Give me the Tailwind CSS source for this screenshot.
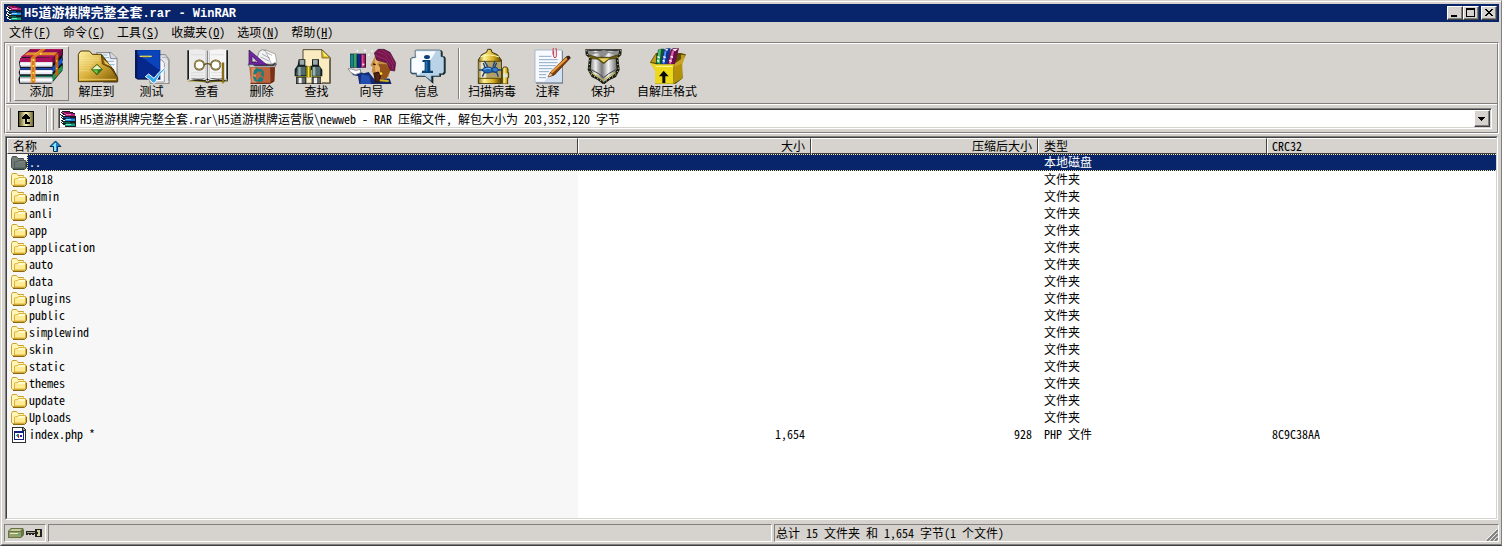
<!DOCTYPE html>
<html lang="zh-CN">
<head>
<meta charset="utf-8">
<title>H5道游棋牌完整全套.rar - WinRAR</title>
<script src="https://cdn.jsdelivr.net/npm/@tailwindcss/browser@4"></script>
</head>
<body class="bg-[#d6d3ce] text-black text-[12px] leading-4 font-['Noto_Sans_Mono_CJK_SC','Liberation_Serif','Noto_Sans_CJK_SC',monospace]">

<svg class="hidden" aria-hidden="true">
  <defs>
    <symbol id="rar" viewBox="0 0 16 16" shape-rendering="crispEdges">
      <path fill="#1a1a22" d="M2 0h8v1h3v1h2v3h1v11H5v-1H4v-1H2v-1H1v-2H0V9h1V6H0V3h1V1h1z"/>
      <path fill="#8c0f5e" d="M3 1h7v1h3v1H6V2H3z"/><path fill="#cf3f93" d="M2 1h2v1h2v1H4V2H2z"/><path fill="#b41f7a" d="M5 3h10v2H5z"/><path fill="#ee7fbd" d="M6 3h5v1H6z"/>
      <path fill="#fff" d="M1 2h1v1h1v1h2v1H3V4H1zM0 4h1v1h1v1h2v1H2V6H0z"/>
      <path fill="#0b4f9c" d="M3 6h7v1h5v1H6V7H3z"/><path fill="#1d93e0" d="M5 8h10v2H5z"/><path fill="#8fdcff" d="M6 8h5v1H6z"/>
      <path fill="#fff" d="M1 7h1v1h1v1h2v1H3V9H1zM0 9h1v1h1v1h2v1H2v-1H0z"/>
      <path fill="#0a6246" d="M3 11h7v1h5v1H6v-1H3z"/><path fill="#12a184" d="M5 13h10v2H5z"/><path fill="#7fe5cc" d="M6 13h5v1H6z"/>
      <path fill="#fff" d="M1 12h1v1h1v1h2v1H3v-1H1z"/>
    </symbol>
    <symbol id="folder" viewBox="0 0 16 14">
      <path fill="#f8d860" stroke="#c8a132" d="M1.500 12.500l-1-1v-9l1-2h4l1.500 2h5.500v2.500h2.500v6l-1.500 1.500z"/>
      <path fill="#fff6b8" d="M1 2.500L2 1h3.500L7 3h5.500v2H4V12H2L1 11z"/>
      <path fill="#ffec94" stroke="#dcb23c" d="M3.500 12v-6h3l1-1.500h7v6.500l-1 1z"/>
      <path fill="#fffbd0" d="M4 6.500h3L8 5h6v2H4z"/>
      <path stroke="#8a6a10" fill="none" d="M2 13.500h11.500l2-2V6"/>
    </symbol>
  </defs>
</svg>

<div class="min-h-screen flex flex-col border-t border-t-[#d6d3ce] border-l border-l-[#d6d3ce] border-b border-b-[#404040] border-r border-r-[#808080]">
<div class="flex-1 flex flex-col border-t border-l border-b border-t-white border-l-white border-b-[#808080] p-0.5">

  <header class="h-[18px] flex items-center bg-[#08246b] text-white pl-0.5 pr-0.5">
    <svg class="size-4 shrink-0"><use href="#rar"/></svg>
    <h1 class="flex-1 pl-0.5 text-[13px] font-bold whitespace-nowrap"><span class="text-[12px] font-['Liberation_Mono',monospace]">H5</span>道游棋牌完整全套<span class="text-[12px] font-['Liberation_Mono',monospace]">.rar - WinRAR</span></h1>
    <button aria-label="最小化" class="w-4 h-3.5 bg-[#d6d3ce] border border-t-white border-l-white border-b-[#404040] border-r-[#404040] shadow-[inset_-1px_-1px_#808080]"><svg class="block" width="14" height="12" shape-rendering="crispEdges"><path d="M3 8h6v2H3z"/></svg></button>
    <button aria-label="最大化" class="w-4 h-3.5 bg-[#d6d3ce] border border-t-white border-l-white border-b-[#404040] border-r-[#404040] shadow-[inset_-1px_-1px_#808080]"><svg class="block" width="14" height="12" shape-rendering="crispEdges"><path fill-rule="evenodd" d="M2 1h9v9H2zM3 3v6h7V3z"/></svg></button>
    <button aria-label="关闭" class="w-4 h-3.5 ml-0.5 bg-[#d6d3ce] border border-t-white border-l-white border-b-[#404040] border-r-[#404040] shadow-[inset_-1px_-1px_#808080]"><svg class="block" width="14" height="12" shape-rendering="crispEdges"><path d="M3 2h2v1h1v1h2V3h1V2h2v1h-1v1H9v1H8v1h1v1h1v1h1v1H9V8H8V7H6v1H5v1H3V8h1V7h1V6h1V5H5V4H4V3H3z"/></svg></button>
  </header>

  <nav class="h-5 flex items-center gap-3 pl-[5px] whitespace-nowrap">
    <button>文件(<u>F</u>)</button>
    <button>命令(<u>C</u>)</button>
    <button>工具(<u>S</u>)</button>
    <button>收藏夹(<u>O</u>)</button>
    <button>选项(<u>N</u>)</button>
    <button>帮助(<u>H</u>)</button>
  </nav>

  <div class="border border-t-[#808080] border-l-[#808080] border-b-white border-r-white">
  <div class="border border-t-white border-l-white border-b-[#808080] border-r-[#808080]">
    <div class="h-[60px] flex items-center pl-0.5 border-b border-b-[#808080] whitespace-nowrap leading-3.5">
      <div class="w-[3px] h-14 mr-[3px] border-l border-l-white border-r border-r-[#808080]"></div>
      <button class="w-[55px] h-[55px] flex flex-col items-center pt-px border border-t-white border-l-white border-b-[#808080] border-r-[#808080]">
        <svg width="51" height="36" viewBox="48 24 153 108">
          <path d="M57 66l6-13 28-26h98v17l-2 5 2 9-3 8 3 8-2 18-33 39H58l-3-14 4-10-3-10 4-10z" fill="#151522"/>
          <path d="M62 51l31-24h94l-29 26z" fill="#b0155e"/><path d="M90 30h92l-8 8H80z" fill="#8c0c55"/>
          <path d="M60 54h98v12H60z" fill="#a8125a"/><path d="M60 66h98v14H62z" fill="#e4e4ee"/><path d="M60 70h98v4H60z" fill="#fff"/>
          <path d="M60 84h98v5H60z" fill="#1c46a8"/><path d="M60 90h98v13H60z" fill="#e8e8f2"/><path d="M60 93h98v4H60z" fill="#fff"/>
          <path d="M60 107h98v5H60z" fill="#16805a"/><path d="M60 112h98v16H60z" fill="#dcdce4"/><path d="M60 117h98v5H60z" fill="#fff"/>
          <path d="M158 54l29-26v15l-29 30z" fill="#7c0a45"/><path d="M158 80l29-30v18l-29 32z" fill="#1250c8"/><path d="M158 105l29-32v17l-29 34z" fill="#1c9a50"/>
          <path d="M158 72l29-27v7l-29 28zM158 98l29-29v6l-29 29z" fill="#111"/>
          <path d="M92 53l32-26h14l-32 26v76H92z" fill="#d9791c"/><path d="M84 37h88l-8 9H72z" fill="#e08a2c"/><path d="M166 46l9-8v65l-9 9z" fill="#c9640c"/>
          <path d="M94 56v72M105 56v72M103 44l19-15" stroke="#f6bd6a" stroke-width="2"/>
          <g fill="#ffe34a"><circle cx="100" cy="60" r="3"/><circle cx="100" cy="78" r="3"/><circle cx="100" cy="99" r="3"/><circle cx="100" cy="119" r="3"/><circle cx="122" cy="41" r="3"/><circle cx="170" cy="63" r="2"/><circle cx="170" cy="85" r="2"/></g>
        </svg>
        <span>添加</span>
      </button>
      <button class="w-[55px] h-[55px] flex flex-col items-center pt-px border border-transparent">
        <svg width="51" height="36" viewBox="213 24 153 108">
          <defs><linearGradient id="gold" x2="1" y2="1"><stop stop-color="#fff2a6"/><stop offset=".5" stop-color="#d9b13c"/><stop offset="1" stop-color="#7a5300"/></linearGradient></defs>
          <path d="M290 38h43l18 17v72h-40z" fill="#f4f6fa" stroke="#555" stroke-width="2"/><path d="M328 36l4 20h19" fill="#d3dbe6" stroke="#556" stroke-width="2"/>
          <path d="M306 45h16M306 53h22M318 64h24M326 74h18" stroke="#8fb6d6" stroke-width="3"/>
          <path d="M235 125V43l7-10h26l9 10h27l30 38 19 32v12z" fill="url(#gold)" stroke="#4d3700" stroke-width="3"/>
          <path d="M304 45l3 27 33 15 10 22z" fill="#8a5c08" stroke="#3d2900" stroke-width="2"/><path d="M310 58l5 13 22 10z" fill="#e9c869"/>
          <path d="M238 55h59M238 62h60M238 69h45M238 76h36M238 84h32M238 92h30" stroke="#fff3b0" stroke-width="2" opacity=".6"/>
          <path d="M238 118h110" stroke="#edc962" stroke-width="3"/>
          <path d="M291 73l16 15-16 17-17-17z" fill="#2f7c21" stroke="#474a20" stroke-width="2"/><path d="M291 75l13 12-12 1-16 0z" fill="#e9f3c0"/><path d="M279 91h14l-1 11z" fill="#75c64a"/>
        </svg>
        <span>解压到</span>
      </button>
      <button class="w-[55px] h-[55px] flex flex-col items-center pt-px border border-transparent">
        <svg width="51" height="36" viewBox="378 24 153 108">
          <path d="M478 44h18l11 14v73h-57v-18h28z" fill="#e4e5e8" stroke="#555" stroke-width="2"/><path d="M486 52h12l8 10v60" fill="none" stroke="#888" stroke-width="2"/><path d="M476 60h10l7 10v56h-40" fill="#f8f8fb" stroke="#777" stroke-width="2"/>
          <path d="M405 30h76v88h-68l-8-5z" fill="#06288d"/><path d="M409 31h70v60l-66-49z" fill="#0a44ba"/><path d="M405 30h7v88l-7-5z" fill="#061858"/><path d="M412 117h69" stroke="#020a38" stroke-width="3"/>
          <path d="M419 49h36" stroke="#f2e558" stroke-width="4"/><path d="M425 51h24" stroke="#9a8628" stroke-width="2"/>
          <path d="M436 110l10-8 16 13q13-19 32-32l2 4q-22 19-31 42h-6q-9-11-23-19z" fill="#35a7ed" stroke="#f7fcff" stroke-width="3"/>
        </svg>
        <span>测试</span>
      </button>
      <button class="w-[55px] h-[55px] flex flex-col items-center pt-px border border-transparent">
        <svg width="51" height="36" viewBox="3 24 153 108">
          <path d="M22 120V31h5l2 83h107l2-83h6v93l-54 3-7 3-8-3z" fill="#1c1c1c"/>
          <path d="M27 29q37-3 54 4v85q-26-8-54 0z" fill="#ececec"/><path d="M139 29q-38-3-55 4v85q27-8 55 0z" fill="#f5f5f5"/>
          <path d="M82 32v84" stroke="#777" stroke-width="3"/><path d="M78 34v80M88 34v80" stroke="#ccc" stroke-width="4"/>
          <path d="M33 44h38M33 98h38M94 44h38M94 98h36M33 107h38M94 107h38" stroke="#d5d5d5" stroke-width="2"/>
          <path d="M24 120q33-7 53-1l5 4 7-4q26-6 53 1" fill="none" stroke="#f8f8f8" stroke-width="3"/><path d="M23 124h55l5 3 8-3h51" fill="none" stroke="#b09a18" stroke-width="2"/>
          <g fill="#fff" stroke="#4a3a14" stroke-width="5"><circle cx="58" cy="75" r="14"/><circle cx="107" cy="75" r="14"/></g><g fill="none" stroke="#d8c36d" stroke-width="2"><circle cx="58" cy="75" r="14"/><circle cx="107" cy="75" r="14"/><path d="M42 71q2-8 6-9M122 73l9-5"/></g><path d="M73 74q9-6 19 0" fill="none" stroke="#5c4a18" stroke-width="4"/>
          <path d="M129 68v60" stroke="#55410a" stroke-width="7"/><path d="M129 68v64" stroke="#c49a22" stroke-width="3"/>
        </svg>
        <span>查看</span>
      </button>
      <button class="w-[55px] h-[55px] flex flex-col items-center pt-px border border-transparent">
        <svg width="51" height="36" viewBox="168 24 153 108">
          <path d="M204 73l7-8h72l7 9-7 7h-72z" fill="#403b42"/>
          <path d="M226 69l12-35 9-5 36 13-9 31z" fill="#f0f1f4" stroke="#666" stroke-width="2"/><path d="M255 29l31 13 4 23-15 8z" fill="#fff" stroke="#888" stroke-width="2"/><path d="M246 42l24 13M242 51l25 12M261 38l15 8" stroke="#888" stroke-width="2"/>
          <path fill-rule="evenodd" d="M207 30l54 45h-54zM216 49v18h19z" fill="#7224a5" stroke="#32134d" stroke-width="2"/>
          <path d="M204 74h14l7 4h56l8-8-5 13h-73z" fill="#c8cdd2" stroke="#555" stroke-width="2"/>
          <path d="M208 82h77l-2 42-11 7h-59z" fill="#b9643c"/><path d="M270 82h15l-2 42-11 6z" fill="#793019"/><path d="M214 83h12l3 46h-14z" fill="#d99164"/><path d="M211 130h58l13-7" fill="none" stroke="#572514" stroke-width="3"/>
          <path d="M219 104l4-14 10-7 1 5 13-1-7 11-5-6-7 10zM244 89l7 4 1 18-5-2-6-8 4-1zM218 108l9 4 2 7h9v5h-14zM236 115l9-6v6h7l-6 10h-11z" fill="#117f83"/>
        </svg>
        <span>删除</span>
      </button>
      <button class="w-[55px] h-[55px] flex flex-col items-center pt-px border border-transparent">
        <svg width="51" height="36" viewBox="333 24 153 108">
          <path d="M369 29h57l25 25v76h-82z" fill="#faecc0" stroke="#514831" stroke-width="3"/><path d="M425 29l1 25h25z" fill="#e1bd25" stroke="#4d3e12" stroke-width="2"/><path d="M427 32l18 18-12-2z" fill="#fff07b"/>
          <path d="M449 58v71h-23" stroke="#716b58" stroke-width="4" fill="none"/>
          <path d="M356 58h20v19h6v13h-3v42h-31V109h-4V88l9-13zM396 58h21v18l10 13v20h-4v23h-28V90h-4V77h5z" fill="#151e20"/>
          <path d="M359 60h14v14h-14zM399 60h14v14h-14z" fill="#9ba8a8"/><path d="M352 80h25v26h-29zM396 80h25v27h-25z" fill="#516a6b"/><path d="M355 81h7v26h-7zM399 81h7v26h-7z" fill="#9db4b2"/>
          <path d="M350 113h26v17h-26zM397 113h25v17h-25z" fill="#666"/><path d="M356 113h9v17h-9zM402 113h9v17h-9z" fill="#eee"/>
          <path d="M378 79h15v33h-15z" fill="#837406"/><path d="M383 80h5v31h-5z" fill="#f2e93a"/><path d="M345 110h34M395 110h30" stroke="#c8bd3b" stroke-width="2"/>
        </svg>
        <span>查找</span>
      </button>
      <button class="w-[55px] h-[55px] flex flex-col items-center pt-px border border-transparent">
        <svg width="51" height="36" viewBox="18 24 153 108">
          <path d="M30 41h48v42H30z" fill="#071424"/><path d="M31 43h9v38h-9z" fill="#16858a"/><path d="M41 42h9v40h-9z" fill="#36a466"/><path d="M52 42h10v42H52z" fill="#14248d"/><path d="M63 43h13v39H63z" fill="#a01862"/><path d="M66 44h4v37h-4z" fill="#e54b8c"/>
          <path d="M24 86l16 2 6 5 16-5v9l10 3 14-4 14 18 49 2 6 17H58l-4-25-14-2z" fill="#142b76"/><path d="M24 86l16 2 6 4 15-4 1 10-17 6-13-7z" fill="#fff" stroke="#777" stroke-width="2"/>
          <path d="M64 103l24 4 5 25H61z" fill="#244db0"/><path d="M108 116h38l7 17H94z" fill="#152663"/>
          <path d="M105 48l-8 17-6 11 7 5-3 13 8 12-2 10 8 4 12-5 24-4 8-25-21-26z" fill="#c88b42"/><path d="M116 72l23 1 12 18-11 24-14 5-7-27z" fill="#925219"/><path d="M105 53l11 13-5 7 9 9-1 22-11-2-3-17z" fill="#e6b166"/>
          <path d="M99 72l8 2M102 100l12-3 8 8-4 19-10 2-3-12z" stroke="#35150d" stroke-width="4" fill="#512512"/><circle cx="123" cy="101" r="4" fill="#ffdc38"/>
          <path d="M103 39l11-11h18l18 9 17 31-3 25-13-2-11-23-30-8z" fill="#76164e" stroke="#401033" stroke-width="2"/><path d="M112 35l22 9 23 29 1 14M107 46l31 13 12 20M125 30l26 17 11 25" fill="none" stroke="#962a60" stroke-width="3"/>
          <path d="M119 121l27 2" stroke="#d2b31c" stroke-width="6"/>
          <g stroke="#fff" stroke-width="2"><path d="M52 29v7M48 33h8M75 27v8M71 31h8M96 30v6M93 33h6M70 70v7M66 73h8M86 42v6M83 45h6"/></g>
        </svg>
        <span>向导</span>
      </button>
      <button class="w-[55px] h-[55px] flex flex-col items-center pt-px border border-transparent">
        <svg width="51" height="36" viewBox="183 24 153 108">
          <path d="M227 34l5-4h71l5 5v14h5l4 5v44l-5 6h-9v6h-23v22l-23-22h-28v-7h-12l-6-5V57l6-6h10z" fill="#10242b"/>
          <path d="M225 32l4-2h70l4 3v17h5l4 4v42l-5 5h-9v7h-24v15l-20-15h-25v-8h-12l-5-4V57l5-5h9z" fill="#bad2e6" stroke="#36535d" stroke-width="2"/>
          <path d="M228 34h60l-34 54-19 16h-3V97h-12l-4-3V59l5-4h8z" fill="#f8fbff"/>
          <ellipse cx="261" cy="51" rx="9" ry="6" fill="#0b3f7e"/><path d="M248 60h23v32h8v7h-33v-7h8V66h-7z" fill="#074275"/><path d="M257 63h5v31h-5z" fill="#2774b5"/>
        </svg>
        <span>信息</span>
      </button>
      <div class="w-0.5 h-[51px] mx-1 border-l border-l-[#808080] border-r border-r-white"></div>
      <button class="w-14 h-[55px] flex flex-col items-center pt-px border border-transparent">
        <svg width="51" height="36" viewBox="378 24 153 108">
          <defs><linearGradient id="brass"><stop stop-color="#887016"/><stop offset=".25" stop-color="#fff49a"/><stop offset=".65" stop-color="#d5ac20"/><stop offset="1" stop-color="#574100"/></linearGradient></defs>
          <path d="M412 131V60l10-16 15-7 3-9h10l3 9 16 7 12 16v71z" fill="url(#brass)" stroke="#3d3306" stroke-width="3"/><path d="M418 51q27-12 56 0" stroke="#fff9b3" stroke-width="3" fill="none"/>
          <path d="M413 64h67v51h-67z" fill="#b2a06b"/><path d="M419 64h17v50h-17z" fill="#ebe3c1"/><path d="M413 64h67M413 115h67" stroke="#675000" stroke-width="3"/>
          <path d="M427 69l5 13 14 7 15-7 6-14M414 90h16M468 90h15M424 110l6-12 13-1M472 110l-5-13-17-2M430 63l10 17M462 63l-6 17" stroke="#163f79" stroke-width="4" fill="none"/>
          <ellipse cx="440" cy="90" rx="16" ry="9" fill="#1e67b7" stroke="#092557" stroke-width="2"/><ellipse cx="462" cy="89" rx="9" ry="7" fill="#347fce" stroke="#092557" stroke-width="2"/><path d="M430 88q11-6 20-1" stroke="#80c5f6" stroke-width="3" fill="none"/>
          <path d="M484 87l4-6h9l4 6v11h2v15h-3v19h-16z" fill="url(#brass)" stroke="#514400" stroke-width="3"/><path d="M486 100h14v12h-14z" fill="#dfe4d2"/>
        </svg>
        <span>扫描病毒</span>
      </button>
      <button class="w-[55px] h-[55px] flex flex-col items-center pt-px border border-transparent">
        <svg width="51" height="36" viewBox="6 24 153 108">
          <path d="M48 33h81v98H48z" fill="#707885"/><path d="M45 30h81v97H45z" fill="#f8faff" stroke="#8ea3bb" stroke-width="2"/><path d="M100 90l25-12v48H72z" fill="#d5e1f1"/>
          <path d="M57 49h37M57 59h56M57 68h56M57 77h50M57 86h40M57 95h30M57 104h22M57 113h21" stroke="#8eabc8" stroke-width="3"/>
          <path d="M99 44V29q0-7 5-7t5 7v19q0 5-4 5t-4-5V33" fill="none" stroke="#cb3b51" stroke-width="3"/>
          <path d="M84 111l8-15 47-46 8-2 4 6-48 51z" fill="#7e3e10" stroke="#3d1d08" stroke-width="2"/><path d="M94 98l47-44" stroke="#ed9c3b" stroke-width="6"/><path d="M139 50l9-2 3 6-7 6z" fill="#342018"/><path d="M84 111l7-12 6 6z" fill="#f5ca8d"/>
        </svg>
        <span>注释</span>
      </button>
      <button class="w-14 h-[55px] flex flex-col items-center pt-px border border-transparent">
        <svg width="51" height="36" viewBox="174 24 153 108">
          <defs><linearGradient id="steel"><stop stop-color="#555"/><stop offset=".25" stop-color="#eee"/><stop offset=".45" stop-color="#777"/><stop offset=".65" stop-color="#f4f4f4"/><stop offset="1" stop-color="#454545"/></linearGradient></defs>
          <path d="M196 28h109l-1 17-9 8 4 36-11 22-19 9-18 14-18-14-18-9-12-22 4-36-10-8z" fill="#171b13"/><path d="M203 32h95l-3 12-8 10 3 34-9 17-16 10-14 12-14-12-16-10-9-17 3-34-9-10z" fill="url(#steel)"/>
          <path d="M202 31l25 6 24-7 24 7 23-6-4 14-29-6-14 12-16-12-29 6z" fill="#8e8e8e"/><path d="M204 44l29 8h37l26-8-5 11-24 3-16 13-17-13-24-3z" fill="#6a5a12" stroke="#392f04" stroke-width="2"/><path d="M235 55h33l-17 12z" fill="#e7d45a"/>
          <path d="M214 89l22 12 15 12 15-12 21-12" fill="none" stroke="#444" stroke-width="3"/><path d="M212 98l24 12 15 12 15-12 22-12" fill="none" stroke="#c6b63f" stroke-width="3"/>
          <g fill="none" stroke="#e5e38d" stroke-width="3" stroke-dasharray="3 8"><path d="M199 31l3 14 8 9-3 35 9 17 18 10 16 13M302 31l-3 14-7 9 3 35-9 17-18 10-16 13"/></g>
        </svg>
        <span>保护</span>
      </button>
      <button class="w-[72px] h-[55px] flex flex-col items-center pt-px border border-transparent">
        <svg width="51" height="36" viewBox="363 24 153 108">
          <path d="M387 67l18-28h74l16 4-13 25 3 47-21 16h-62V89z" fill="#5d4c00"/><path d="M390 66l15-24v26zM480 45l12-1-12 20z" fill="#bf9b1c"/>
          <path d="M405 65l6-36 8-3h11v46h-25z" fill="#0b572d"/><path d="M407 67l6-38 7-2-4 45z" fill="#58ba78"/><path d="M421 66l8-37 8-4h12l-9 49h-19z" fill="#11328e"/><path d="M424 69l7-37 6-2-7 42z" fill="#5a8ff4"/><path d="M440 68l9-39 7-4h18l-4 15-8 33h-22z" fill="#6c0c4c"/><path d="M443 70l10-38 7-2-10 42z" fill="#d467aa"/><path d="M432 28l9-2-2 7zM454 28l17-2-9 8z" fill="#fff"/><path d="M409 50l7 3M427 50l7 3M449 49l7 3M409 61l5 3M425 61l6 3M445 61l7 3" stroke="#fff" stroke-width="4"/>
          <path d="M387 68l19 5h56l-9 16h-53z" fill="#e8d232"/><path d="M402 76h55v55h-55z" fill="#ecd91c"/><path d="M457 76l27-9v48l-27 16z" fill="#b3910a"/><path d="M462 70l22-15 10-10-9 25-23 10z" fill="#c9a323"/><path d="M404 79h51" stroke="#fff69a" stroke-width="3"/>
          <path d="M428 92l15 17h-10v20h-9v-20h-10z" fill="#090909"/>
        </svg>
        <span>自解压格式</span>
      </button>
    </div>

    <div class="h-7 flex items-center border-t border-t-white pl-0.5">
      <div class="w-[3px] h-[22px] mr-[7px] border-l border-l-white border-r border-r-[#808080]"></div>
      <button aria-label="上一级" class="size-4"><svg width="16" height="16" shape-rendering="crispEdges"><defs><linearGradient id="up" x2="1"><stop stop-color="#5c5620"/><stop offset=".5" stop-color="#fff6c0"/><stop offset="1" stop-color="#6c6630"/></linearGradient></defs><path d="M0 0h16v16H0z"/><path fill="url(#up)" d="M1 1h14v14H1z"/><path d="M7 3h2v1h1v1h1v1h1v2H9v3h3v2H7V8H4V6h1V5h1V4h1z"/></svg></button>
      <div class="w-0.5 h-[26px] ml-3 mr-[3px] border-l border-l-[#808080] border-r border-r-white"></div>
      <div class="w-[3px] h-[22px] mr-1 border-l border-l-white border-r border-r-[#808080]"></div>
      <div class="relative flex-1 min-w-0 h-[21px] mr-[5px] flex items-center bg-white border border-t-[#808080] border-l-[#808080] border-b-white border-r-white shadow-[inset_1px_1px_#404040,inset_-1px_-1px_#d6d3ce] pl-px">
        <svg class="size-4 shrink-0"><use href="#rar"/></svg>
        <select aria-label="路径" class="flex-1 min-w-0 h-4 appearance-none bg-transparent pl-1 pr-5 outline-none">
          <option>H5道游棋牌完整全套.rar\H5道游棋牌运营版\newweb - RAR 压缩文件, 解包大小为 203,352,120 字节</option>
        </select>
        <span class="pointer-events-none absolute right-px top-px w-4 h-[17px] flex items-center justify-center bg-[#d6d3ce] border border-t-white border-l-white border-b-[#404040] border-r-[#404040] shadow-[inset_-1px_-1px_#808080]"><svg width="8" height="4" shape-rendering="crispEdges"><path d="M0 0h7v1H6v1H5v1H4v1H3V3H2V2H1V1H0z"/></svg></span>
      </div>
    </div>
  </div>
  </div>

  <main class="flex-1 mt-0.5 mx-px border border-t-[#808080] border-l-[#808080] border-b-white border-r-white flex">
    <div class="flex-1 border border-t-[#404040] border-l-[#404040] border-b-[#d6d3ce] border-r-[#d6d3ce] bg-[linear-gradient(90deg,#f7f7f7_571px,#fff_571px)]">
      <table class="w-full table-fixed border-separate border-spacing-0 whitespace-nowrap">
        <colgroup><col class="w-[571px]"><col class="w-[233px]"><col class="w-[227px]"><col class="w-[229px]"><col></colgroup>
        <thead>
          <tr class="h-4 leading-3.5 bg-[#d6d3ce] text-left">
            <th class="p-0 pl-[5px] font-normal border-t border-l border-t-white border-l-white border-b border-r border-b-[#404040] border-r-[#404040]"><span class="flex items-center gap-3">名称 <svg width="13" height="12" viewBox="0 0 13 12"><path fill="#1685d0" stroke="#092c55" d="M6.500 1l5.500 5.500H8.500v5h-4v-5H1z"/><path fill="#88e5ff" d="M6 3h1v8H5V6H3z"/></svg></span></th>
            <th class="p-0 pr-[5px] text-right font-normal border-t border-l border-t-white border-l-white border-b border-r border-b-[#404040] border-r-[#404040]">大小</th>
            <th class="p-0 pr-[5px] text-right font-normal border-t border-l border-t-white border-l-white border-b border-r border-b-[#404040] border-r-[#404040]">压缩后大小</th>
            <th class="p-0 pl-[5px] font-normal border-t border-l border-t-white border-l-white border-b border-r border-b-[#404040] border-r-[#404040]">类型</th>
            <th class="p-0 pl-1 font-normal border-t border-l border-t-white border-l-white border-b border-b-[#404040]">CRC32</th>
          </tr>
        </thead>
        <tbody id="rows">
          <tr class="h-[17px] leading-[15px] text-white bg-[repeating-linear-gradient(90deg,#ffe98a_0_1px,#08246b_1px_2px)]">
            <td class="p-0"><div class="h-[17px] flex"><span class="w-5 shrink-0 flex items-center justify-end bg-[#f7f7f7]"><svg class="w-4 h-3.5 hue-rotate-90 saturate-[0.2] brightness-50"><use href="#folder"/></svg></span><span class="flex-1 my-px pl-px leading-3.5 bg-[#08246b] border-l border-dotted border-[#ffe98a]">..</span></div></td>
            <td class="p-0 bg-[#08246b] bg-clip-padding border-y border-transparent"></td>
            <td class="p-0 bg-[#08246b] bg-clip-padding border-y border-transparent"></td>
            <td class="p-0 pl-1.5 bg-[#08246b] bg-clip-padding border-y border-transparent leading-3.5 align-top">本地磁盘</td>
            <td class="p-0 bg-[#08246b] bg-clip-padding border-y border-transparent"></td>
          </tr>
        </tbody>
        <tbody>
          <tr class="h-[17px] leading-[15px]">
            <td class="p-0 pl-1"><div class="h-[17px] flex items-center gap-0.5"><svg class="size-4 shrink-0" viewBox="0 0 16 16" shape-rendering="crispEdges"><path fill="#303030" d="M1 0h11l3 3v13H1z"/><path fill="#fff" d="M2 1h9v3h3v11H2z"/><path fill="#a0a0a0" d="M12 1v2h2z"/><path fill="#102080" d="M3 4h10v9H3z"/><path fill="#fff" d="M4 6h8v6H4z"/><path fill="#28a" d="M5 8h1V7h2v3H6V9H5z"/><path fill="#d22" d="M7 8h1v3H7z"/><path fill="#22a" d="M9 8h2v2H9z"/></svg><span class="pb-0.5">index.php *</span></div></td>
            <td class="p-0 pb-0.5 pr-1.5 text-right">1,654</td>
            <td class="p-0 pb-0.5 pr-1.5 text-right">928</td>
            <td class="p-0 pb-0.5 pl-1.5">PHP 文件</td>
            <td class="p-0 pb-0.5 pl-[5px]">8C9C38AA</td>
          </tr>
        </tbody>
      </table>
    </div>
  </main>

  <footer class="mt-1 h-[18px] flex gap-0.5 leading-4 whitespace-nowrap">
    <div class="w-[42px] flex items-center gap-0.5 pl-[3px] border border-t-[#808080] border-l-[#808080] border-b-white border-r-white">
      <svg width="16" height="12" viewBox="0 0 16 12"><path fill="#687342" d="M0 4l3-3h12l1 2v5l-3 3H0z"/><path fill="#c5cda0" d="M1 4l3-2h10l-2 2z"/><path fill="#95a16c" d="M1 5h12v5H1z"/><path fill="#e5ecc3" d="M2 6h8v1H2z"/><path fill="#25b68b" d="M10 7h2v1h-2z"/></svg>
      <svg width="17" height="8" shape-rendering="crispEdges"><path fill="#222" d="M0 2h9V0h7v8H9V5H8v1H6V5H5v1H3V5H2v1H0z"/><path fill="#a5a087" d="M1 3h8v1H1z"/><path fill="#d4d0a0" d="M11 1h3v6h-3z"/><path fill="#222" d="M11 3h1v2h-1z"/></svg>
    </div>
    <div class="flex-1 border border-t-[#808080] border-l-[#808080] border-b-white border-r-white"></div>
    <div class="flex-1 flex justify-between items-end pl-px border border-t-[#808080] border-l-[#808080] border-b-white border-r-white">
      <span>总计 15 文件夹 和 1,654 字节(1 个文件)</span>
      <svg width="12" height="12"><path stroke="#fff" d="M0 11L11 0M4 11l7-7M8 11l3-3"/><path stroke="#808080" stroke-width="2" d="M1 12L12 1M5 12l7-7M9 12l3-3"/></svg>
    </div>
  </footer>
</div>
</div>

<template id="folder-row">
  <tr class="h-[17px] leading-[15px]">
    <td class="p-0 pl-1"><div class="h-[17px] flex items-center gap-0.5"><svg class="w-4 h-3.5 shrink-0"><use href="#folder"/></svg><span class="pb-0.5"></span></div></td>
    <td class="p-0"></td>
    <td class="p-0"></td>
    <td class="p-0 pb-0.5 pl-1.5">文件夹</td>
    <td class="p-0"></td>
  </tr>
</template>
<script>
  const names = ['2018', 'admin', 'anli', 'app', 'application', 'auto', 'data', 'plugins', 'public', 'simplewind', 'skin', 'static', 'themes', 'update', 'Uploads'];
  const template = document.getElementById('folder-row');
  for (const name of names) {
    const row = template.content.cloneNode(true);
    row.querySelector('span').textContent = name;
    document.getElementById('rows').append(row);
  }
</script>
</body>
</html>
